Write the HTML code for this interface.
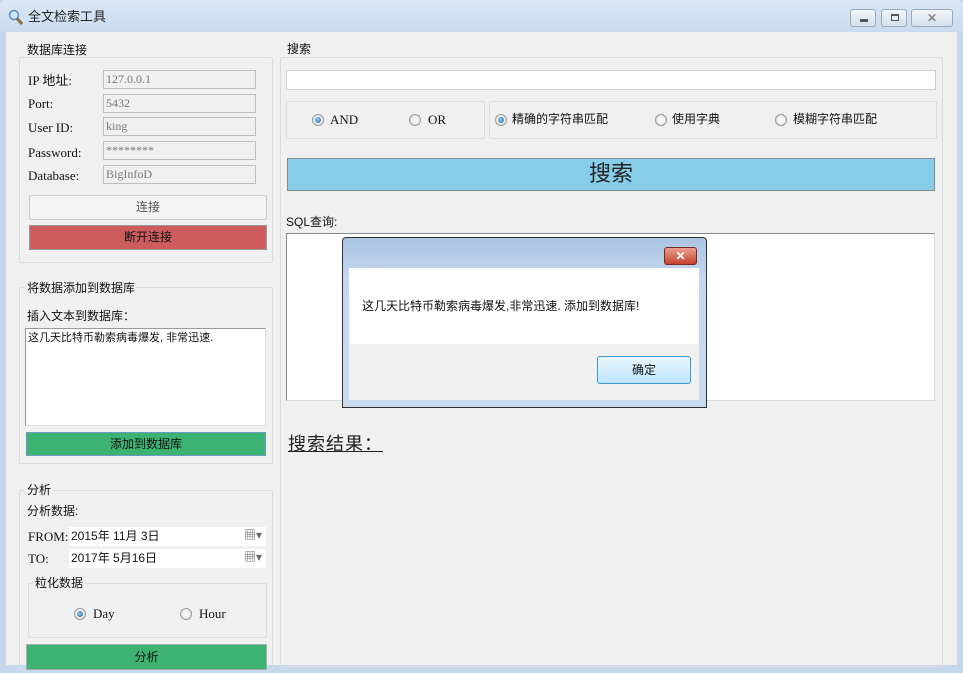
<!DOCTYPE html>
<html><head><meta charset="utf-8"><style>
*{box-sizing:border-box;margin:0;padding:0}
body{width:963px;height:673px;overflow:hidden;background:#c5d7ea;font-family:"Liberation Serif","Noto Sans CJK SC",serif;font-size:12px;color:#111;position:relative}
.a{position:absolute;line-height:1.2}
.cj{font-family:"Liberation Sans","Noto Sans CJK SC",sans-serif}
.grp{position:absolute;border:1px solid #dcdcdc;border-radius:2px}
.lbl{position:absolute;background:#f0f0f0;padding:0 2px;font-family:"Liberation Sans","Noto Sans CJK SC",sans-serif;font-size:12px;line-height:14px}
.inp{position:absolute;background:#f0f0f0;border:1px solid #bdbdbd;color:#777;font-size:12px;padding-left:2px;line-height:17px}
.rad{position:absolute;width:12px;height:12px;border-radius:50%;border:1px solid #999;background:radial-gradient(circle,#fff,#ddd)}
.rad.on::after{content:"";position:absolute;left:2px;top:2px;width:6px;height:6px;border-radius:50%;background:radial-gradient(circle at 40% 40%,#8fd0f5,#1f5f9a)}
</style></head><body>
<div class="a" style="left:0;top:0;width:963px;height:32px;background:linear-gradient(#dbe8f5,#c9dbee);border-radius:6px 6px 0 0"></div>
<svg class="a" style="left:8px;top:9px" width="16" height="17"><circle cx="6" cy="6" r="4.5" fill="#cfe6fa" stroke="#5a8fc0" stroke-width="1.5"/><line x1="9" y1="9.5" x2="14" y2="15" stroke="#8a6a3a" stroke-width="3"/></svg>
<div class="a cj" style="left:28px;top:9px;font-size:13px;color:#222">全文检索工具</div>
<div class="a" style="left:850px;top:9px;width:26px;height:18px;border:1px solid #9ab;border-radius:3px;background:linear-gradient(#f2f6fa,#d4e0ec)"><div class="a" style="left:9px;top:9px;width:8px;height:3px;background:#555"></div></div>
<div class="a" style="left:881px;top:9px;width:26px;height:18px;border:1px solid #9ab;border-radius:3px;background:linear-gradient(#f2f6fa,#d4e0ec)"><div class="a" style="left:9px;top:4px;width:8px;height:7px;border:1px solid #555;border-top-width:2px"></div></div>
<div class="a" style="left:911px;top:9px;width:42px;height:18px;border:1px solid #9ab;border-radius:3px;background:linear-gradient(#f2f6fa,#d4e0ec);text-align:center;font:bold 12px/16px 'Liberation Sans';color:#888">✕</div>
<div class="a" style="left:6px;top:32px;width:951px;height:633px;background:#f0f0f0"></div>

<div class="grp" style="left:19px;top:57px;width:254px;height:206px"></div>
<div class="lbl" style="left:25px;top:43px">数据库连接</div>
<div class="a" style="left:28px;top:73px;font-size:13px">IP 地址:</div>
<div class="a" style="left:28px;top:96px;font-size:13px">Port:</div>
<div class="a" style="left:28px;top:120px;font-size:13px">User ID:</div>
<div class="a" style="left:28px;top:145px;font-size:13px">Password:</div>
<div class="a" style="left:28px;top:168px;font-size:13px">Database:</div>
<div class="inp" style="left:103px;top:70px;width:153px;height:19px">127.0.0.1</div>
<div class="inp" style="left:103px;top:94px;width:153px;height:19px">5432</div>
<div class="inp" style="left:103px;top:117px;width:153px;height:19px">king</div>
<div class="inp" style="left:103px;top:141px;width:153px;height:19px">********</div>
<div class="inp" style="left:103px;top:165px;width:153px;height:19px">BigInfoD</div>
<div class="a cj" style="left:29px;top:195px;width:238px;height:25px;border:1px solid #ccc;border-radius:2px;background:#f4f4f4;text-align:center;line-height:23px;font-size:12px;color:#555">连接</div>
<div class="a cj" style="left:29px;top:225px;width:238px;height:25px;border:1px solid #999;background:#cd5c5c;text-align:center;line-height:23px;font-size:12px">断开连接</div>

<div class="grp" style="left:19px;top:287px;width:254px;height:177px"></div>
<div class="lbl" style="left:25px;top:281px">将数据添加到数据库</div>
<div class="a cj" style="left:27px;top:309px;font-size:12px">插入文本到数据库：</div>
<div class="a cj" style="left:25px;top:328px;width:241px;height:98px;background:#fff;border:1px solid #999;border-right-color:#ddd;border-bottom-color:#ddd;padding:2px 2px 0;font-size:11px;line-height:14px">这几天比特币勒索病毒爆发, 非常迅速.</div>
<div class="a cj" style="left:26px;top:432px;width:240px;height:24px;border:1px solid #6a9ac8;background:#3cb371;text-align:center;line-height:22px;font-size:12px">添加到数据库</div>

<div class="grp" style="left:19px;top:490px;width:254px;height:180px"></div>
<div class="lbl" style="left:25px;top:483px">分析</div>
<div class="a cj" style="left:27px;top:504px;font-size:12px">分析数据:</div>
<div class="a" style="left:28px;top:529px;font-size:13px">FROM:</div>
<div class="a" style="left:28px;top:551px;font-size:13px">TO:</div>
<div class="a" style="left:69px;top:527px;width:197px;height:19px;background:#fff;padding-left:2px;line-height:19px;font-size:12px"><span class="cj">2015年 11月 3日</span><span class="a" style="right:4px;top:1px;color:#666">▦▾</span></div>
<div class="a" style="left:69px;top:549px;width:197px;height:19px;background:#fff;padding-left:2px;line-height:19px;font-size:12px"><span class="cj">2017年 5月16日</span><span class="a" style="right:4px;top:1px;color:#666">▦▾</span></div>
<div class="grp" style="left:28px;top:583px;width:239px;height:55px"></div>
<div class="lbl" style="left:33px;top:576px">粒化数据</div>
<div class="rad on" style="left:74px;top:608px"></div><div class="a" style="left:93px;top:606px;font-size:13px">Day</div>
<div class="rad" style="left:180px;top:608px"></div><div class="a" style="left:199px;top:606px;font-size:13px">Hour</div>
<div class="a cj" style="left:26px;top:644px;width:241px;height:26px;border:1px solid #aaa;background:#3cb371;text-align:center;line-height:24px;font-size:12px">分析</div>

<div class="grp" style="left:280px;top:57px;width:663px;height:610px"></div>
<div class="lbl" style="left:285px;top:42px">搜索</div>
<div class="a" style="left:286px;top:70px;width:650px;height:20px;background:#fff;border:1px solid #ccc"></div>
<div class="grp" style="left:286px;top:101px;width:199px;height:38px"></div>
<div class="grp" style="left:489px;top:101px;width:448px;height:38px"></div>
<div class="rad on" style="left:312px;top:114px"></div><div class="a" style="left:330px;top:112px;font-size:13px">AND</div>
<div class="rad" style="left:409px;top:114px"></div><div class="a" style="left:428px;top:112px;font-size:13px">OR</div>
<div class="rad on" style="left:495px;top:114px"></div><div class="a cj" style="left:512px;top:112px;font-size:12px">精确的字符串匹配</div>
<div class="rad" style="left:655px;top:114px"></div><div class="a cj" style="left:672px;top:112px;font-size:12px">使用字典</div>
<div class="rad" style="left:775px;top:114px"></div><div class="a cj" style="left:793px;top:112px;font-size:12px">模糊字符串匹配</div>
<div class="a cj" style="left:287px;top:158px;width:648px;height:33px;border:1px solid #888;background:#87ceeb;text-align:center;font-size:22px;line-height:30px;color:#222">搜索</div>
<div class="a cj" style="left:286px;top:215px;font-size:12px">SQL查询:</div>
<div class="a" style="left:286px;top:233px;width:649px;height:168px;background:#fff;border:1px solid #888;border-right-color:#ddd;border-bottom-color:#ddd"></div>
<div class="a cj" style="left:288px;top:434px;font-size:18px;text-decoration:underline;color:#222;letter-spacing:1px">搜索结果：</div>

<div class="a" style="left:342px;top:237px;width:365px;height:171px;border:1px solid #333;border-radius:4px 4px 0 0;background:linear-gradient(#a9c4e2,#c3d7ee 40px,#c8daee)"></div>
<div class="a" style="left:664px;top:247px;width:33px;height:18px;border:1px solid #7a2a20;border-radius:3px;background:linear-gradient(#e8a090,#c4412e);color:#fff;text-align:center;font:bold 12px/16px 'Liberation Sans'">✕</div>
<div class="a" style="left:349px;top:268px;width:350px;height:76px;background:#fff"></div>
<div class="a" style="left:349px;top:344px;width:350px;height:56px;background:#f0f0f0"></div>
<div class="a cj" style="left:362px;top:299px;font-size:12px">这几天比特币勒索病毒爆发,非常迅速. 添加到数据库!</div>
<div class="a cj" style="left:597px;top:356px;width:94px;height:28px;border:1px solid #3c9ad0;border-radius:3px;background:linear-gradient(#eaf6fd,#bee6fd);text-align:center;line-height:26px;font-size:12px">确定</div>
</body></html>
